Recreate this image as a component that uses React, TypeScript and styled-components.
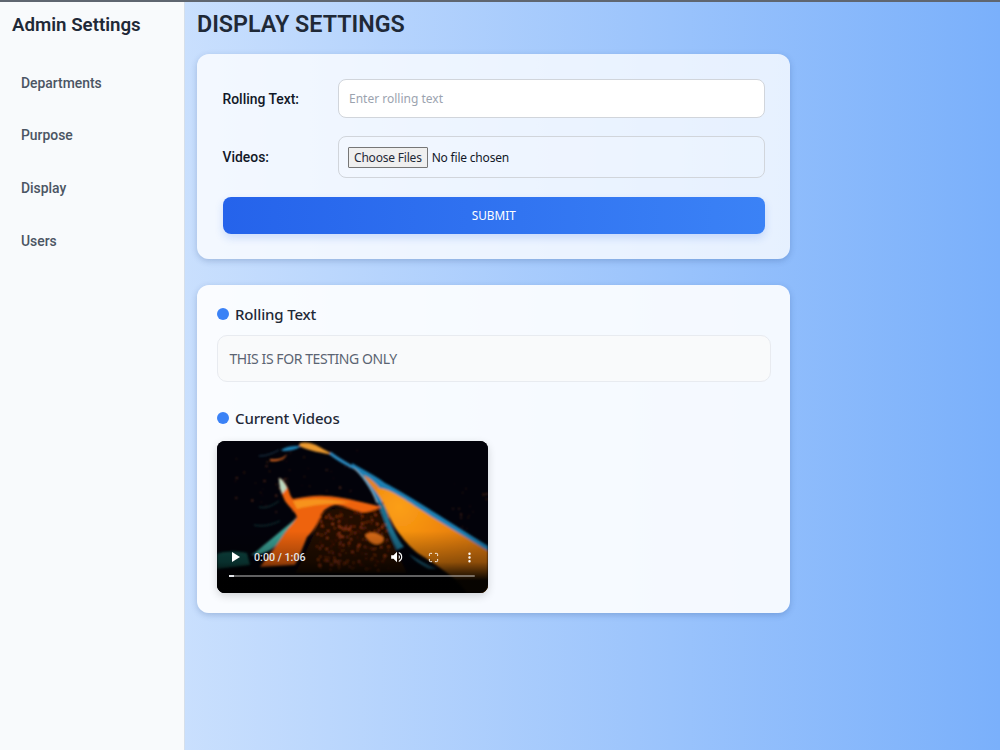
import React from 'react'
import styled, { createGlobalStyle } from 'styled-components'
import { Maximize, EllipsisVertical } from 'lucide-react'

const GlobalStyle = createGlobalStyle`
  html, body {
    margin: 0;
    height: 100%;
  }
  * {
    box-sizing: border-box;
  }
  body {
    font-family: Roboto, sans-serif;
  }
`

const Page = styled.div`
  display: flex;
  width: 1000px;
  height: 750px;
  overflow: hidden;
  border-top: 2px solid #5f6670;
  background: linear-gradient(to right, #dbeafe, #7ab0fb);
`
const Sidebar = styled.aside`
  flex: 0 0 185px;
  padding: 12px 12px 0;
  background: #f8fafc;
  border-right: 1px solid #d5dfeb;
`
const Brand = styled.h2`
  margin: 0 0 25.5px;
  font-size: 18.7px;
  line-height: 22px;
  font-weight: 600;
  color: #1f2937;
`
const NavList = styled.nav`
  display: flex;
  flex-direction: column;
`
const NavItem = styled.a`
  height: 52.8px;
  padding: 12px 9px;
  font-size: 13.9px;
  line-height: 18px;
  font-weight: 500;
  color: #4b5563;
`
const Main = styled.main`
  flex: 1;
  padding: 9px 12px;
`
const PageTitle = styled.h1`
  margin: 0 0 17px;
  font-size: 23.3px;
  line-height: 26px;
  font-weight: 600;
  color: #1f2937;
`
const FormCard = styled.section`
  width: 593px;
  margin-bottom: 26px;
  padding: 25px 25px 25px 25.5px;
  background: rgba(255, 255, 255, 0.78);
  border-radius: 12px;
  box-shadow: 0 2px 6px rgba(30, 64, 120, 0.24);
`
const ListCard = styled.section`
  width: 593px;
  padding: 19px 19px 19.5px 20px;
  background: rgba(255, 255, 255, 0.9);
  border-radius: 12px;
  box-shadow: 0 2px 6px rgba(30, 64, 120, 0.24);
`
const FormRow = styled.div`
  display: flex;
  align-items: center;
  margin-bottom: 18px;
`
const FieldLabel = styled.label`
  flex: 0 0 115.5px;
  font-size: 13.9px;
  font-weight: 500;
  color: #111827;
`
const TextField = styled.input`
  flex: 1;
  height: 39px;
  padding: 0 10px;
  font-family: 'Noto Sans', sans-serif;
  font-size: 12px;
  color: #111827;
  background: #fff;
  border: 1px solid #d1d5db;
  border-radius: 8px;
  &::placeholder {
    color: #9ca3af;
  }
`
const FileBox = styled.div`
  flex: 1;
  display: flex;
  align-items: center;
  gap: 4px;
  height: 42px;
  padding: 0 9px;
  font-family: 'Noto Sans', sans-serif;
  font-size: 12px;
  letter-spacing: -0.2px;
  color: #111827;
  background: rgba(255, 255, 255, 0.15);
  border: 1px solid #d1d5db;
  border-radius: 8px;
`
const ChooseButton = styled.span`
  height: 21px;
  padding: 0 5px;
  line-height: 19px;
  color: #1f2937;
  background: #efefef;
  border: 1px solid #767676;
  border-radius: 1px;
`
const SubmitButton = styled.button`
  display: block;
  width: 100%;
  height: 37px;
  margin-top: 19px;
  padding: 0 0 2px;
  font-family: 'Noto Sans', sans-serif;
  font-size: 11.8px;
  color: #fff;
  background: linear-gradient(to right, #2563eb, #3b82f6);
  border: 0;
  border-radius: 8px;
  box-shadow: 0 4px 8px rgba(37, 99, 235, 0.18);
`
const SectionTitle = styled.h3`
  display: flex;
  align-items: center;
  gap: 6px;
  margin: 0 0 11px;
  font-family: 'Noto Sans', sans-serif;
  font-size: 15px;
  line-height: 20px;
  font-weight: 500;
  letter-spacing: -0.15px;
  color: #1f2937;
  &::before {
    content: '';
    width: 12px;
    height: 12px;
    border-radius: 50%;
    background: #3b82f6;
  }
`
const RollingBox = styled.div`
  height: 47px;
  margin-bottom: 26px;
  padding: 0 11.5px;
  font-family: 'Noto Sans', sans-serif;
  font-size: 14px;
  letter-spacing: -0.43px;
  line-height: 46px;
  color: #5b6472;
  background: #f9fafb;
  border: 1px solid #e8ebf0;
  border-radius: 10px;
`
const VideoFrame = styled.div`
  position: relative;
  width: 271px;
  height: 152px;
  margin-top: 13px;
  overflow: hidden;
  background: #000;
  border-radius: 8px;
  box-shadow: 0 3px 8px rgba(0, 0, 0, 0.16);
`
const VideoArt = styled.svg`
  display: block;
  width: 100%;
  height: 100%;
`
const VideoControls = styled.div`
  position: absolute;
  left: 0;
  right: 0;
  bottom: 0;
  height: 62px;
  padding: 0 13px 0 12px;
  background: linear-gradient(
    to bottom,
    rgba(0, 0, 0, 0),
    rgba(0, 0, 0, 0.35) 50%,
    rgba(0, 0, 0, 0.97) 80%
  );
`
const ControlRow = styled.div`
  display: flex;
  align-items: center;
  height: 20px;
  margin-top: 16px;
  color: #fff;
`
const PlayIcon = styled.svg`
  margin-left: 3px;
`
const TimeText = styled.span`
  margin-left: 14px;
  font-size: 10.7px;
  font-weight: 500;
  color: #e5e7eb;
`
const ControlIcons = styled.div`
  display: flex;
  align-items: center;
  gap: 24px;
  margin-left: auto;
  margin-right: -1px;
`
const Track = styled.div`
  height: 2px;
  margin-top: 8px;
  background: rgba(255, 255, 255, 0.38);
  border-radius: 1px;
`
const TrackFill = styled.div`
  width: 5px;
  height: 100%;
  background: #e5e7eb;
`

const nav = ['Departments', 'Purpose', 'Display', 'Users']

// little seeded generator so the paint specks stay put between renders
const specks = (count: number, x: number, y: number, w: number, h: number, seed: number) => {
  let s = seed
  const next = () => {
    s = (s * 9301 + 49297) % 233280
    return s / 233280
  }
  return Array.from({ length: count }, () => ({
    cx: x + next() * w,
    cy: y + next() * h,
    r: 0.4 + next() * 0.7,
    o: 0.35 + next() * 0.65,
  }))
}

const underArch = specks(230, 100, 70, 72, 60, 11)
const leftDust = specks(34, 18, 10, 60, 70, 37)
const topDust = specks(20, 84, 8, 60, 50, 53)
const rightDust = specks(18, 236, 40, 34, 50, 71)

const SplashArt = () => (
  <VideoArt viewBox="0 0 271 152" preserveAspectRatio="none">
    <defs>
      <radialGradient id="glow" gradientUnits="userSpaceOnUse" cx="182" cy="66" r="90">
        <stop offset="0" stopColor="#fb9f18" />
        <stop offset="0.45" stopColor="#f28a0b" />
        <stop offset="1" stopColor="#d9760a" />
      </radialGradient>
      <filter id="soft" x="-5%" y="-5%" width="110%" height="110%">
        <feGaussianBlur stdDeviation="0.8" />
      </filter>
    </defs>
    <rect width="271" height="152" fill="#02020a" />
    <g filter="url(#soft)">
      {[...leftDust, ...topDust, ...rightDust].map((d, i) => (
        <circle key={i} cx={d.cx} cy={d.cy} r={d.r} fill="#a8502a" opacity={d.o * 0.7} />
      ))}
      <path d="M103 76 C110 66 126 64 144 71 L166 68 C170 88 178 108 190 132 L78 132 C90 110 98 90 103 76 Z" fill="#220a04" />
      {underArch.map((d, i) => (
        <circle key={i} cx={d.cx} cy={d.cy} r={d.r} fill="#c94e18" opacity={d.o} />
      ))}
      <path d="M148 94 C154 90 160 92 166 96 C168 100 164 104 158 103 C154 102 150 98 148 94 Z" fill="#d86a16" />

      <path d="M135 22 C146 29 156 33 168 42 C190 53 235 83 271 105 L271 112 C235 90 190 62 165 52 L165 70 C157 54 148 38 135 25 Z" fill="#1d80b4" />
      <path d="M160 60 C166 76 170 88 180 109 L187 106 C178 94 172 80 168 64 Z" fill="#1f6f8e" />
      <path d="M192 113 C200 118 210 124 220 128 L212 128 C204 124 196 118 192 113 Z" fill="#1f5f78" />
      <path d="M146 34 C152 36 158 42 162 46 L164 58 C158 50 152 42 146 34 Z" fill="#e8841a" />
      <path d="M160 47 C172 46 190 60 215 76 C235 88 255 100 271 110 L271 152 L250 152 C240 136 210 118 202 113 C195 108 188 100 185 96 C178 88 172 76 168 66 C165 60 161 54 160 47 Z" fill="url(#glow)" />
      <path d="M135 26 C146 34 154 46 160 62" stroke="#b8d4dc" strokeWidth="1" fill="none" />

      <path d="M83 2 C92 0 100 4 106 8 C110 10 114 12 116 14 C106 12 92 10 82 5 Z" fill="#ec9a2e" />
      <path d="M113 12 C120 18 128 22 137 27" stroke="#2a8ac0" strokeWidth="3" fill="none" />
      <path d="M64 9 C70 5 76 5 84 5 C80 9 72 10 66 10 Z" fill="#1f82b4" />
      <path d="M53 18 C58 19 66 18 70 13 C68 19 60 21 53 20 Z" fill="#e2681f" />
      <path d="M42 15 C50 15 56 12 62 9" stroke="#27506a" strokeWidth="0.8" fill="none" />

      <path d="M80 76 C72 84 56 96 40 110 C38 112 34 114 33 114 C48 114 60 108 67 93 C72 86 78 82 80 76 Z" fill="#3aa094" />
      <path d="M37 84 C46 86 54 84 63 80 M42 66 C50 68 56 64 62 60" stroke="#2f8a80" strokeWidth="0.6" fill="none" opacity="0.7" />
      <path d="M62 37 C66 38 70 44 72 50 C73 54 74 56 76 58 C88 56 98 54 108 55 C122 55 140 60 165 66 C158 69 150 72 144 71 C134 68 126 64 118 64 C110 66 105 70 103 76 C100 84 95 92 90 96 C86 106 82 116 78 124 L43 126 C52 114 60 104 67 93 C72 86 78 80 80 76 C78 70 72 66 68 60 C64 52 62 44 62 37 Z" fill="#ee6410" />
      <path d="M62 37 C65 38 68 42 70 47 L65 53 C63 48 62 42 62 37 Z" fill="#b9d8c0" />
      <path d="M76 60 C92 57 112 57 134 62 C116 62 94 64 80 68 Z" fill="#f7931a" />
      <path d="M0 113 C8 110 18 110 30 112 L33 124 L0 128 Z" fill="#0d4a44" />
    </g>
  </VideoArt>
)

const PlayGlyph = () => (
  <PlayIcon width="8" height="10" viewBox="0 0 8 10" fill="#fff">
    <path d="M0 0 L8 5 L0 10 Z" />
  </PlayIcon>
)

const VolumeGlyph = () => (
  <svg width="14" height="14" viewBox="0 0 24 24" fill="#fff">
    <path d="M2 9v6h4l6 6V3L6 9H2zm13-.5v7a4 4 0 0 0 0-7zM15 3.5v2.1a7 7 0 0 1 0 12.8v2.1a9 9 0 0 0 0-17z" />
  </svg>
)

export default function App() {
  return (
    <>
      <GlobalStyle />
      <Page>
        <Sidebar>
          <Brand>Admin Settings</Brand>
          <NavList>
            {nav.map((item) => (
              <NavItem key={item}>{item}</NavItem>
            ))}
          </NavList>
        </Sidebar>
        <Main>
          <PageTitle>DISPLAY SETTINGS</PageTitle>
          <FormCard>
            <FormRow>
              <FieldLabel>Rolling Text:</FieldLabel>
              <TextField placeholder="Enter rolling text" />
            </FormRow>
            <FormRow>
              <FieldLabel>Videos:</FieldLabel>
              <FileBox>
                <ChooseButton>Choose Files</ChooseButton>
                <span>No file chosen</span>
              </FileBox>
            </FormRow>
            <SubmitButton>SUBMIT</SubmitButton>
          </FormCard>
          <ListCard>
            <SectionTitle>Rolling Text</SectionTitle>
            <RollingBox>THIS IS FOR TESTING ONLY</RollingBox>
            <SectionTitle>Current Videos</SectionTitle>
            <VideoFrame>
              <SplashArt />
              <VideoControls>
                <ControlRow>
                  <PlayGlyph />
                  <TimeText>0:00 / 1:06</TimeText>
                  <ControlIcons>
                    <VolumeGlyph />
                    <Maximize size={11} strokeWidth={2} />
                    <EllipsisVertical size={13} strokeWidth={2.5} />
                  </ControlIcons>
                </ControlRow>
                <Track>
                  <TrackFill />
                </Track>
              </VideoControls>
            </VideoFrame>
          </ListCard>
        </Main>
      </Page>
    </>
  )
}
